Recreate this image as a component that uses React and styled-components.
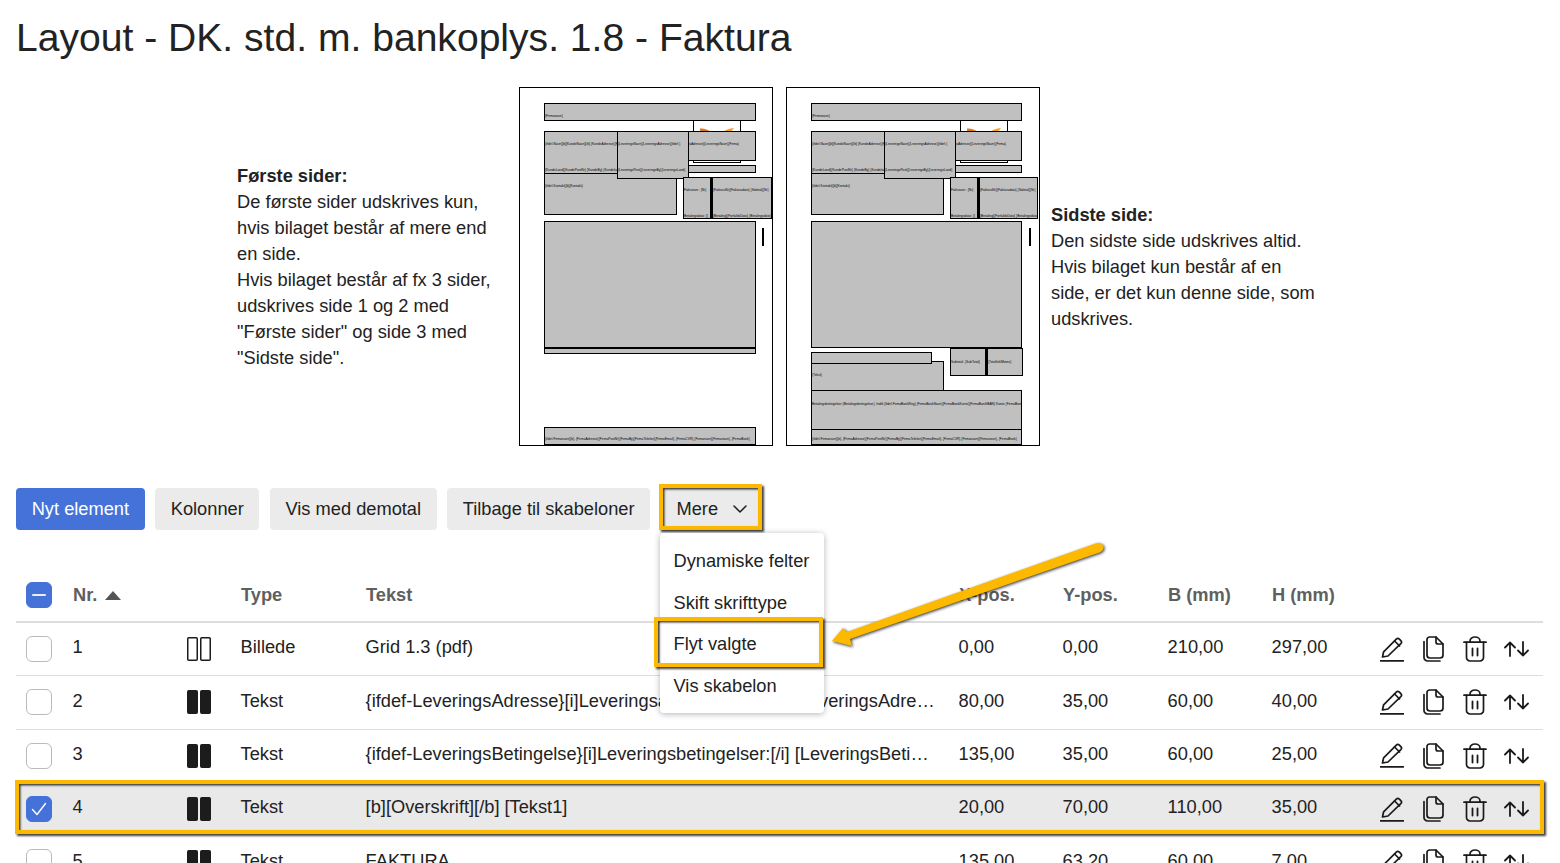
import React from 'react'
import styled, { createGlobalStyle } from 'styled-components'

const firstPage = [
  { x: 25, y: 16, w: 212, h: 18, lines: [{ y: 12, t: '{Firmanavn}' }] },
  { x: 174, y: 33, w: 48, h: 43, logo: true },
  { x: 25, y: 44, w: 100, h: 43, lines: [{ y: 12, t: '{ifdef-Navn}[b]{KundeNavn}[/b] {KundeAdresse}{KundeNr}' }, { y: 38, t: '{KundeLand}{KundePostNr} {KundeBy} {Kundeland}' }] },
  { x: 150, y: 78, w: 87, h: 8 },
  { x: 150, y: 44, w: 87, h: 30, lines: [{ y: 12, t: '      {LeveringsAdresse}{LeveringsNavn}{Firma}' }] },
  { x: 25, y: 86, w: 133, h: 42, lines: [{ y: 12, t: '{ifdef-Kontakt}[b]{Kontakt}' }] },
  { x: 98, y: 44, w: 72, h: 48, lines: [{ y: 12, t: '{LeveringsNavn}{LeveringsAdresse}{ifdef-}' }, { y: 38, t: '{LeveringsPost}{LeveringsBy}{LeveringsLand}' }] },
  { x: 164, y: 90, w: 28, h: 42, lines: [{ y: 12, t: 'Fakturanr.: {Nr}' }, { y: 38, t: 'Betalingsdato: {}' }] },
  { x: 192, y: 90, w: 61, h: 42, thick: true, lines: [{ y: 12, t: '{FakturaNr}{Fakturadato} {Sidetal}{Nr}' }, { y: 38, t: '{Betaling}{ForfaldsDato} {Betalingsdato}' }] },
  { x: 25, y: 134, w: 212, h: 127 },
  { x: 25, y: 261, w: 212, h: 6 },
  { x: 25, y: 340, w: 212, h: 18, lines: [{ y: 11, t: '{ifdef-Firmanavn}{b}, {FirmaAdresse}{FirmaPostNr}{FirmaBy}{FirmaTelefon}{FirmaEmail}, {FirmaCVR} {Firmanavn}{Firmanavn}, {FirmaBank}' }] },
]

const lastPage = [
  ...firstPage.slice(0, 8).map((b) => (b.w === 212 ? { ...b, w: 211 } : b.w === 87 ? { ...b, w: 86 } : b)),
  { ...firstPage[8], w: 60 },
  { x: 25, y: 134, w: 211, h: 127 },
  { x: 25, y: 274, w: 133, h: 30, lines: [{ y: 13, t: '{Tekst}' }] },
  { x: 25, y: 265, w: 121, h: 12 },
  { x: 164, y: 261, w: 36, h: 28, lines: [{ y: 13, t: 'Subtotal: {SubTotal}' }] },
  { x: 200, y: 261, w: 37, h: 28, thick: true, lines: [{ y: 13, t: '{TotalInklMoms}' }] },
  { x: 25, y: 303, w: 211, h: 40, lines: [{ y: 13, t: 'Betalingsbetingelser {Betalingsbetingelser}. Indtil {ifdef-FirmaBankReg} {FirmaBankNavn}{FirmaBankKonto}{FirmaBankIBAN} Konto {FirmaBankSwift}. Fuld' }] },
  { x: 25, y: 342, w: 211, h: 16, lines: [{ y: 9, t: '{ifdef-Firmanavn}{b}, {FirmaAdresse}{FirmaPostNr}{FirmaBy}{FirmaTelefon}{FirmaEmail}, {FirmaCVR} {Firmanavn}{Firmanavn}, {FirmaBank}' }] },
]

const columns = ['Type', 'Tekst', 'X-pos.', 'Y-pos.', 'B (mm)', 'H (mm)']

const rows = [
  { nr: 1, outline: true, type: 'Billede', text: 'Grid 1.3 (pdf)', x: '0,00', y: '0,00', b: '210,00', h: '297,00' },
  { nr: 2, type: 'Tekst', text: '{ifdef-LeveringsAdresse}[i]Leveringsadresse:[/i][br][b][LeveringsAdresse] [LeveringsAdresse2]', x: '80,00', y: '35,00', b: '60,00', h: '40,00' },
  { nr: 3, type: 'Tekst', text: '{ifdef-LeveringsBetingelse}[i]Leveringsbetingelser:[/i] [LeveringsBetingelse]', x: '135,00', y: '35,00', b: '60,00', h: '25,00' },
  { nr: 4, selected: true, type: 'Tekst', text: '[b][Overskrift][/b] [Tekst1]', x: '20,00', y: '70,00', b: '110,00', h: '35,00' },
  { nr: 5, type: 'Tekst', text: 'FAKTURA', x: '135,00', y: '63,20', b: '60,00', h: '7,00' },
]

const PencilIcon = () => (
  <svg width="24" height="25" viewBox="0 0 24 25" fill="none" stroke="#1a1a1a" strokeWidth="1.7" strokeLinejoin="round" strokeLinecap="round">
    <path d="M2.5 20 L3.6 14.8 L16.3 2.2 a2.2 2.2 0 0 1 3.1 0 l1.4 1.4 a2.2 2.2 0 0 1 0 3.1 L8 19 Z" />
    <path d="M14.6 4 l5 5" />
    <path d="M0.5 23.8 H23.5" strokeWidth="1.8" />
  </svg>
)

const CopyIcon = () => (
  <svg width="21" height="26" viewBox="0 0 21 26" fill="none" stroke="#1a1a1a" strokeWidth="1.7" strokeLinejoin="round" strokeLinecap="round">
    <path d="M4 3.5 a2.5 2.5 0 0 1 2.5 -2.5 H13 L20 8 V19 a3 3 0 0 1 -3 3 H7 a3 3 0 0 1 -3 -3 Z" />
    <path d="M13 1 V6 a2 2 0 0 0 2 2 H20" />
    <path d="M1 5.5 V21.5 a3.5 3.5 0 0 0 3.5 3.5 H17" />
  </svg>
)

const TrashIcon = () => (
  <svg width="24" height="26" viewBox="0 0 24 26" fill="none" stroke="#1a1a1a" strokeWidth="1.7" strokeLinejoin="round" strokeLinecap="round">
    <path d="M1 6.2 H23" strokeWidth="1.8" />
    <path d="M7 6 V5 a5 4 0 0 1 10 0 V6" />
    <path d="M3.5 6.2 V21.5 a3.5 3.5 0 0 0 3.5 3.5 H17 a3.5 3.5 0 0 0 3.5 -3.5 V6.2" />
    <path d="M9.5 12.5 V19.5 M14.5 12.5 V19.5" strokeWidth="1.8" />
  </svg>
)

const MoveIcon = () => (
  <svg width="25" height="16" viewBox="0 0 25 16" fill="none" stroke="#1a1a1a" strokeWidth="1.8" strokeLinejoin="round" strokeLinecap="round">
    <path d="M6 15 V1.5 M1 6.5 L6 1.5 L11 6.5" />
    <path d="M19 1 V14.5 M14 9.5 L19 14.5 L24 9.5" />
  </svg>
)

const ColumnsIcon = ({ outline }) => (
  <svg width="24" height="24" viewBox="0 0 24 24" fill={outline ? 'none' : '#1c1c1c'} stroke="#1c1c1c" strokeWidth={outline ? 1.5 : 1}>
    <rect x={outline ? 0.75 : 0.5} y={outline ? 0.75 : 0.5} width={outline ? 9.5 : 10} height={outline ? 22.5 : 23} rx="1" />
    <rect x={outline ? 13.75 : 13.5} y={outline ? 0.75 : 0.5} width={outline ? 9.5 : 10} height={outline ? 22.5 : 23} rx="1" />
  </svg>
)

const Diagram = ({ blocks }) => (
  <Sheet>
    {blocks.map((b, i) => (
      <Block key={i} $x={b.x} $y={b.y} $w={b.w} $h={b.h} $logo={b.logo} $thick={b.thick}>
        {b.logo && (
          <LogoMark width="46" height="6" viewBox="0 0 46 6">
            <path d="M6 4 L6 0.5 Q12 0 17 4 Z" fill="#d97a1c" />
            <path d="M29 4 Q33 0.5 40 0 L37 4 Z" fill="#f5a623" />
          </LogoMark>
        )}
        {b.lines && b.lines.map((l, j) => <BlockLine key={j} $y={l.y}>{l.t}</BlockLine>)}
      </Block>
    ))}
    <Marker />
  </Sheet>
)

const App = () => {
  return (
    <Page>
      <GlobalStyle />
      <Title>Layout - DK. std. m. bankoplys. 1.8 - Faktura</Title>

      <Preview>
        <Note $width={270}>
          <b>Første sider:</b><br />
          De første sider udskrives kun,<br />
          hvis bilaget består af mere end<br />
          en side.<br />
          Hvis bilaget består af fx 3 sider,<br />
          udskrives side 1 og 2 med<br />
          "Første sider" og side 3 med<br />
          "Sidste side".
        </Note>
        <Sheets>
          <Diagram blocks={firstPage} />
          <Diagram blocks={lastPage} />
        </Sheets>
        <Note $width={272}>
          <b>Sidste side:</b><br />
          Den sidste side udskrives altid.<br />
          Hvis bilaget kun består af en<br />
          side, er det kun denne side, som<br />
          udskrives.
        </Note>
      </Preview>

      <Toolbar>
        <Button $primary>Nyt element</Button>
        <Button>Kolonner</Button>
        <Button>Vis med demotal</Button>
        <Button>Tilbage til skabeloner</Button>
        <MoreWrap>
          <MoreButton>
            Mere
            <svg width="14" height="8" viewBox="0 0 14 8" fill="none" stroke="#1f1f1f" strokeWidth="1.5" strokeLinecap="round" strokeLinejoin="round">
              <path d="M1 1 L7 7 L13 1" />
            </svg>
          </MoreButton>
          <Menu>
            <MenuItem>Dynamiske felter</MenuItem>
            <MenuItem>Skift skrifttype</MenuItem>
            <MenuItem $marked>Flyt valgte</MenuItem>
            <MenuItem>Vis skabelon</MenuItem>
          </Menu>
        </MoreWrap>
      </Toolbar>

      <Table>
        <HeadRow>
          <CheckCell><Checkbox $checked><Dash /></Checkbox></CheckCell>
          <HeadCell>Nr. <SortArrow /></HeadCell>
          <div />
          {columns.map((c) => <HeadCell key={c}>{c}</HeadCell>)}
          <div />
        </HeadRow>
        {rows.map((r) => (
          <Row key={r.nr} $selected={r.selected}>
            <CheckCell>
              <Checkbox $checked={r.selected}>
                {r.selected && (
                  <svg width="16" height="14" viewBox="0 0 16 14" fill="none" stroke="#fff" strokeWidth="1.4" strokeLinecap="round" strokeLinejoin="round">
                    <path d="M1.5 7.5 L6 12.5 L14.5 1.5" />
                  </svg>
                )}
              </Checkbox>
            </CheckCell>
            <Cell>{r.nr}</Cell>
            <IconCell><ColumnsIcon outline={r.outline} /></IconCell>
            <Cell>{r.type}</Cell>
            <Cell>{r.text}</Cell>
            <Cell>{r.x}</Cell>
            <Cell>{r.y}</Cell>
            <Cell>{r.b}</Cell>
            <Cell>{r.h}</Cell>
            <Actions>
              <ActionSlot><PencilIcon /></ActionSlot>
              <ActionSlot><CopyIcon /></ActionSlot>
              <ActionSlot><TrashIcon /></ActionSlot>
              <ActionSlot><MoveIcon /></ActionSlot>
            </Actions>
          </Row>
        ))}
      </Table>

      <Arrow width="290" height="115" viewBox="0 0 290 115">
        <path
          d="M272 4 Q279 4 278.5 9 Q278 12.5 273 14 L25 100 L27 107 L7 102 L18 89 L22 93 Z"
          fill="#fdb900"
        />
      </Arrow>
    </Page>
  )
}

const GlobalStyle = createGlobalStyle`
  html, body {
    margin: 0;
    height: 100%;
    overflow: hidden;
    background: #fff;
  }
  * {
    box-sizing: border-box;
  }
`

const Page = styled.div`
  position: relative;
  height: 863px;
  overflow: hidden;
  padding: 0 16px;
  font-family: 'Liberation Sans', Arial, sans-serif;
  font-size: 18.25px;
  color: #222;
`

const Title = styled.h1`
  margin: 0;
  height: 87px;
  padding-top: 14px;
  font-size: 39.1px;
  line-height: 48px;
  font-weight: 400;
  color: #222;
`

const Preview = styled.div`
  display: flex;
  align-items: center;
  justify-content: center;
  height: 359px;
`

const Note = styled.div`
  width: ${(p) => p.$width}px;
  line-height: 26px;
  flex: none;

  b {
    font-weight: 700;
  }
`

const Sheets = styled.div`
  display: flex;
  gap: 13px;
  margin: 0 11px 0 12px;
`

const Sheet = styled.div`
  position: relative;
  width: 254px;
  height: 359px;
  border: 1px solid #000;
  background: #fff;
`

const Block = styled.div`
  position: absolute;
  left: ${(p) => p.$x - 1}px;
  top: ${(p) => p.$y - 1}px;
  width: ${(p) => p.$w}px;
  height: ${(p) => p.$h}px;
  border: 1px solid #000;
  border-left-width: ${(p) => (p.$thick ? 2 : 1)}px;
  background: ${(p) => (p.$logo ? '#fff' : '#c0c0c0')};
  overflow: hidden;
`

const LogoMark = styled.svg`
  display: block;
  margin-top: 7px;
`

const BlockLine = styled.span`
  position: absolute;
  left: 0;
  top: ${(p) => p.$y - 2}px;
  font-size: 3.3px;
  line-height: 4px;
  white-space: pre;
  color: #000;
`

const Marker = styled.div`
  position: absolute;
  left: 242px;
  top: 140px;
  width: 2px;
  height: 18px;
  background: #000;
`

const Toolbar = styled.div`
  display: flex;
  gap: 10.3px;
  margin-top: 42px;
  height: 42px;
`

const Button = styled.button`
  height: 42px;
  padding: 0 15.7px;
  border: none;
  border-radius: 4px;
  background: ${(p) => (p.$primary ? '#4472d9' : '#ebebeb')};
  color: ${(p) => (p.$primary ? '#fff' : '#222')};
  font-family: inherit;
  font-size: 18.25px;
  cursor: pointer;
`

const MoreWrap = styled.div`
  position: relative;
  width: 100px;
  margin-left: -1px;
`

const MoreButton = styled(Button)`
  position: relative;
  width: 100px;
  display: flex;
  align-items: center;
  justify-content: space-between;
  padding: 0 13px 0 17px;

  &::after {
    content: '';
    position: absolute;
    inset: -4px -2px 0 -1px;
    border: 4px solid #fdb900;
    box-shadow: 1.5px 1.5px 2px rgba(0, 0, 0, 0.75), inset 1.5px 1.5px 2px rgba(0, 0, 0, 0.75);
  }
`

const Menu = styled.div`
  position: absolute;
  z-index: 5;
  top: 45px;
  left: 0;
  width: 164px;
  height: 180px;
  padding-top: 7.2px;
  background: #fff;
  border-radius: 4px;
  box-shadow: 0 1px 6px rgba(0, 0, 0, 0.3);
`

const MenuItem = styled.div`
  position: relative;
  height: 41.5px;
  line-height: 41px;
  padding-left: 14px;
  color: #222;

  ${(p) => p.$marked && `
    &::after {
      content: '';
      position: absolute;
      inset: -6.2px 1px -2.8px -6px;
      border: 4px solid #fdb900;
      box-shadow: 1.5px 1.5px 2px rgba(0, 0, 0, 0.75), inset 1.5px 1.5px 2px rgba(0, 0, 0, 0.75);
    }
  `}
`

const Table = styled.div`
  width: 1527px;
  margin-top: 45px;
`

const gridColumns = '47px 107px 61px 125px 593px 104px 105px 104px 108px 173px'

const HeadRow = styled.div`
  display: grid;
  grid-template-columns: ${gridColumns};
  align-items: center;
  height: 48px;
  padding-bottom: 6px;
  border-bottom: 2px solid #ddd;
`

const Row = styled.div`
  position: relative;
  display: grid;
  grid-template-columns: ${gridColumns};
  align-items: center;
  height: 53.33px;
  border-bottom: 1px solid #ddd;
  isolation: isolate;

  ${(p) => p.$selected && `
    border-bottom-color: transparent;

    &::after {
      content: '';
      position: absolute;
      z-index: -1;
      inset: -3px -1px 1px -1px;
      background: #e9e9e9;
      border: 4px solid #fdb900;
      box-shadow: 1.5px 1.5px 2px rgba(0, 0, 0, 0.75), inset 1.5px 1.5px 2px rgba(0, 0, 0, 0.75);
    }
  `}
`

const CheckCell = styled.div`
  display: flex;
  padding-left: 10px;
`

const Checkbox = styled.span`
  display: flex;
  align-items: center;
  justify-content: center;
  width: 26px;
  height: 26px;
  border-radius: 6px;
  border: 1px solid ${(p) => (p.$checked ? '#4472d9' : '#bbb')};
  background: ${(p) => (p.$checked ? '#4472d9' : '#fff')};
`

const Dash = styled.span`
  width: 14px;
  height: 2px;
  border-radius: 1px;
  background: #e8eefb;
`

const HeadCell = styled.div`
  display: flex;
  align-items: center;
  gap: 3px;
  padding-left: 10px;
  font-weight: 700;
  color: #5f5f5f;
  white-space: pre;
`

const SortArrow = styled.span`
  width: 0;
  height: 0;
  border-left: 8.5px solid transparent;
  border-right: 8.5px solid transparent;
  border-bottom: 9px solid #555;
`

const Cell = styled.div`
  padding: 0 12px 3.4px 9.6px;
  white-space: nowrap;
  overflow: hidden;
  text-overflow: ellipsis;
  color: #222;
`

const IconCell = styled.div`
  display: flex;
  padding-left: 17px;
`

const Actions = styled.div`
  display: flex;
  padding-left: 1px;
`

const ActionSlot = styled.span`
  display: flex;
  align-items: center;
  justify-content: center;
  width: 41.5px;
  height: 26px;
`

const Arrow = styled.svg`
  position: absolute;
  z-index: 6;
  left: 825px;
  top: 539px;
  filter: drop-shadow(1.5px 1.5px 1.5px rgba(0, 0, 0, 0.8));
`

export default App
